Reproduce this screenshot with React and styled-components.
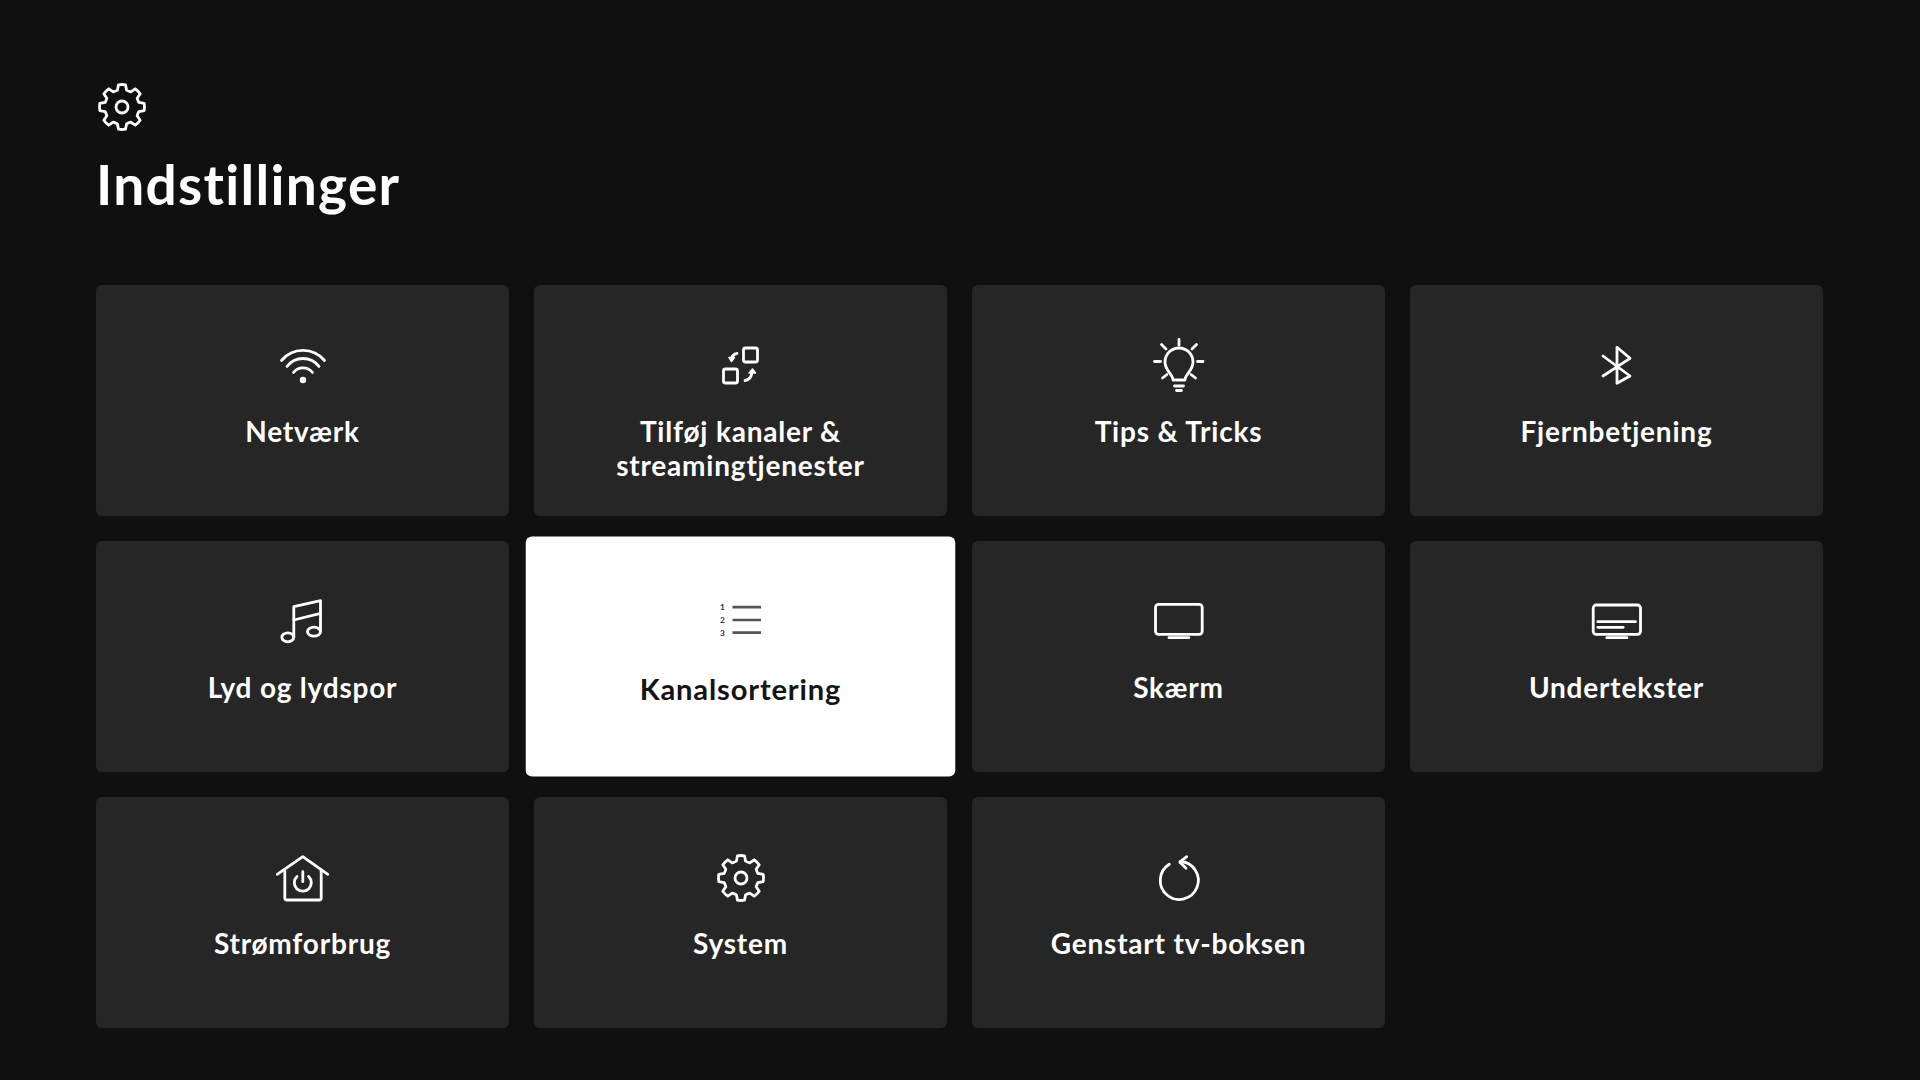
import React from 'react';
import styled, { createGlobalStyle } from 'styled-components';

const GlobalStyle = createGlobalStyle`
    html, body {
        margin: 0;
        padding: 0;
        background: #101010;
    }
`;

const Page = styled.div`
    box-sizing: border-box;
    width: 1920px;
    height: 1080px;
    overflow: hidden;
    padding: 81px 0 0 96px;
    background: #101010;
    color: #fff;
    font-family: Lato, "Noto Sans", sans-serif;
`;

const Header = styled.header`
    height: 204px;
`;

const HeaderIcon = styled.svg`
    display: block;
    width: 52px;
    height: 52px;
    fill: none;
    stroke: currentColor;
    stroke-width: 2.8;
    stroke-linecap: round;
    stroke-linejoin: round;
`;

const Title = styled.h1`
    margin: 17px 0 0 0;
    font-size: 55px;
    line-height: 68px;
    font-weight: 700;
    letter-spacing: 1.3px;
`;

const Grid = styled.div`
    display: grid;
    grid-template-columns: repeat(4, 413px);
    grid-auto-rows: 231px;
    gap: 25px;
`;

const Card = styled.div`
    box-sizing: border-box;
    display: flex;
    flex-direction: column;
    align-items: center;
    padding-top: 51px;
    border-radius: 6px;
    background: ${p => (p.$focused ? '#fff' : '#262626')};
    color: ${p => (p.$focused ? '#141414' : '#fff')};
    transform: ${p => (p.$focused ? 'scale(1.04)' : 'none')};
`;

const Icon = styled.svg`
    display: block;
    flex: none;
    width: 60px;
    height: 60px;
    fill: none;
    stroke: currentColor;
    stroke-width: 2.8;
    stroke-linecap: round;
    stroke-linejoin: round;
`;

const Label = styled.div`
    margin-top: 18px;
    font-size: 28px;
    line-height: 34px;
    font-weight: 700;
    letter-spacing: 0.8px;
    text-align: center;
`;

const pt = (r, deg) => {
    const a = (deg * Math.PI) / 180;
    return `${(30 + r * Math.cos(a)).toFixed(2)} ${(30 + r * Math.sin(a)).toFixed(2)}`;
};

// 8 rounded teeth, one pointing straight up
const gearPath = () => {
    let d = '';
    for (let i = 0; i < 8; i++) {
        const a = i * 45 - 90;
        d += `${i === 0 ? 'M' : 'L'}${pt(22.5, a - 9)} A22.500 22.500 0 0 1 ${pt(22.5, a + 9)} `;
        d += `L${pt(17.5, a + 15)} A17.500 17.500 0 0 0 ${pt(17.5, a + 30)} `;
    }
    return d + 'Z';
};

const Gear = () => (
    <>
        <path d={gearPath()} />
        <circle cx="30" cy="30" r="6" />
    </>
);

const Wifi = () => (
    <>
        <path d="M8.500 24.500 A28 28 0 0 1 51.500 24.500" />
        <path d="M14 30.500 A20 20 0 0 1 46 30.500" />
        <path d="M20.500 36.500 A12 12 0 0 1 39.500 36.500" />
        <circle cx="30" cy="44" r="3.200" fill="currentColor" stroke="none" />
    </>
);

const AddChannels = () => (
    <>
        <rect x="32.500" y="12" width="14" height="14" rx="2" />
        <rect x="12.500" y="33" width="14" height="14" rx="2" />
        <path d="M26 17.500 C23 18 21 19.500 20.500 23" />
        <path d="M18 21.500 L23.500 21.500 L20.500 25.500 Z" fill="currentColor" strokeWidth="1.500" />
        <path d="M34 44.500 C38 44 40.500 41 41 36" />
        <path d="M38 37 L44.500 37 L41.500 33 Z" fill="currentColor" strokeWidth="1.500" />
    </>
);

const Bulb = () => (
    <>
        <path d="M24 44 C24 38 16 35 16 26 A14 14 0 0 1 44 26 C44 35 36 38 36 44 Z" />
        <path d="M25.500 50 H34.500 M27.500 54.500 H32.500" />
        <path d="M30 3.500 V9 M5.500 25.500 H11.500 M48.500 25.500 H54 M12.500 8.500 L17 13 M47.500 8.500 L43 13 M13.500 42 L18 38.500 M46.500 42 L42 38.500" />
    </>
);

const Bluetooth = () => <path d="M16 20 L43 40 L30 47.300 V11.300 L43 22.300 L16 40" />;

const Music = () => (
    <>
        <path d="M20.800 45 V14.700 L47.500 8.700 V38" />
        <path d="M20.800 28 L47.500 21.300" />
        <ellipse cx="14.800" cy="45.300" rx="6" ry="4.500" />
        <ellipse cx="41" cy="39.700" rx="6.500" ry="4.500" />
    </>
);

const NumberedList = () => (
    <>
        <path d="M21.800 17 H49.300 M21.800 29.400 H49.300 M21.800 41.600 H49.300" stroke="#555" strokeWidth="2.600" strokeLinecap="butt" />
        <g fill="#333" stroke="none" fontSize="8" fontWeight="700" fontFamily="Lato, sans-serif" textAnchor="middle">
            <text x="12.200" y="19.800">1</text>
            <text x="12.200" y="32.200">2</text>
            <text x="12.200" y="44.400">3</text>
        </g>
    </>
);

const Screen = () => (
    <>
        <rect x="6.500" y="12.300" width="46.700" height="30" rx="3" />
        <path d="M20 45.700 H39.800" />
    </>
);

const Subtitles = () => (
    <>
        <rect x="6.200" y="13" width="47.300" height="29.300" rx="3" />
        <path d="M10.800 29.700 H48.500 M10.800 35.300 H36.200 M19.800 45.700 H40" />
    </>
);

const PowerHouse = () => (
    <>
        <path d="M4.200 26.300 L29.800 8.700 L54.800 26.300" />
        <path d="M11.800 22 V50 Q11.800 52 13.800 52 H46.200 Q48.200 52 48.200 50 V22" />
        <path d="M29.800 23.700 V33.700" />
        <path d="M24 28.500 A8.500 8.500 0 1 0 35.600 28.500" />
    </>
);

const Restart = () => (
    <>
        <path d="M20.300 16.300 A19 19 0 1 0 31.500 13.500" />
        <path d="M37.700 8.700 L30.700 14 L37 20.300" />
    </>
);

const items = [
    { label: 'Netværk', icon: <Wifi /> },
    { label: <>Tilføj kanaler &<br />streamingtjenester</>, icon: <AddChannels /> },
    { label: 'Tips & Tricks', icon: <Bulb /> },
    { label: 'Fjernbetjening', icon: <Bluetooth /> },
    { label: 'Lyd og lydspor', icon: <Music /> },
    { label: 'Kanalsortering', icon: <NumberedList />, focused: true },
    { label: 'Skærm', icon: <Screen /> },
    { label: 'Undertekster', icon: <Subtitles /> },
    { label: 'Strømforbrug', icon: <PowerHouse /> },
    { label: 'System', icon: <Gear /> },
    { label: 'Genstart tv-boksen', icon: <Restart /> },
];

export default function App() {
    return (
        <Page>
            <GlobalStyle />
            <Header>
                <HeaderIcon viewBox="4 4 52 52"><Gear /></HeaderIcon>
                <Title>Indstillinger</Title>
            </Header>
            <Grid>
                {items.map((item, i) => (
                    <Card key={i} $focused={item.focused}>
                        <Icon viewBox="0 0 60 60">{item.icon}</Icon>
                        <Label>{item.label}</Label>
                    </Card>
                ))}
            </Grid>
        </Page>
    );
}
